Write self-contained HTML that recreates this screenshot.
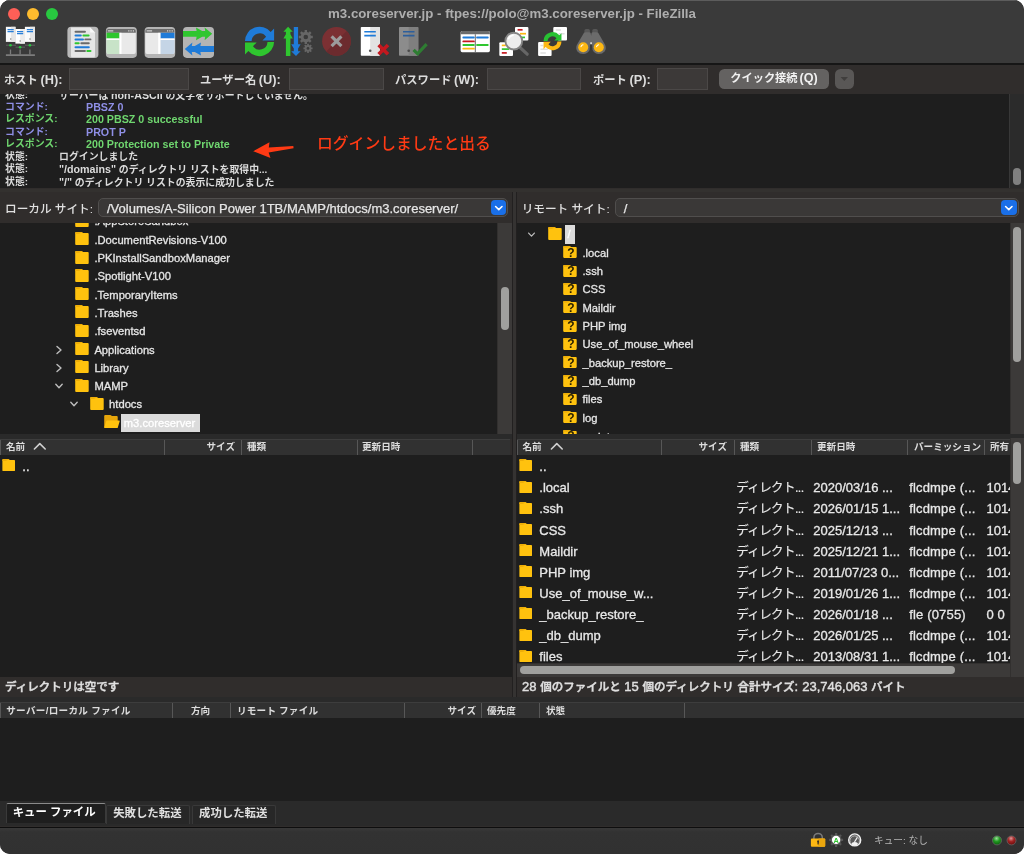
<!DOCTYPE html>
<html lang="ja">
<head>
<meta charset="utf-8">
<title>m3.coreserver.jp - ftpes://polo@m3.coreserver.jp - FileZilla</title>
<style>
*{box-sizing:border-box;margin:0;padding:0}
html,body{width:1024px;height:854px;background:#fff;overflow:hidden}
body{font-family:"Liberation Sans","Noto Sans CJK JP",sans-serif;color:#e4e4e4;font-size:12px;-webkit-font-smoothing:antialiased}
#win{will-change:transform;position:absolute;left:0;top:0;width:1024px;height:854px;background:#302d2c;border-radius:10px;overflow:hidden}
.abs{position:absolute}
#titlebar{position:absolute;left:0;top:0;width:1024px;height:63px;background:#3a3a3a;border-top:1px solid #5c5c5c}
#title{position:absolute;left:0;top:4.6px;width:1024px;text-align:center;font-size:13.25px;font-weight:bold;color:#aeaeae;line-height:16px;letter-spacing:0px}
.tl{position:absolute;top:6.5px;width:12px;height:12px;border-radius:50%}
#tbline{position:absolute;left:0;top:63px;width:1024px;height:2px;background:#161616}
/* quick connect */
#qc{position:absolute;left:0;top:65px;width:1024px;height:29.2px;background:#302d2c}
.lbl{position:absolute;font-size:11.3px;font-weight:bold;color:#dcdcdc;line-height:16px;white-space:nowrap}
.lbl i{font-style:normal;font-size:12.8px;margin-left:2.6px}
.inp{position:absolute;top:3px;height:22px;background:#3c3938;border:1px solid #4b4847}
/* log */
#log{position:absolute;left:0;top:94.2px;width:1024px;height:94px;background:#1e1e1e;overflow:hidden}
.ll{position:absolute;left:5px;font-size:9.9px;line-height:12.5px;white-space:nowrap;font-weight:bold}
.ll span{position:absolute;left:0;top:0}
.ll i{font-style:normal;font-size:10.7px}
.c-st{color:#dcdcdc}.c-cmd{color:#8f8fe6}.c-rsp{color:#6fd66f}

/* panes */
.band{position:absolute;background:#33312f}
.sitebar{position:absolute;top:192px;height:31.3px;background:#302d2c}
.sitelbl{position:absolute;top:8.6px;font-size:11.65px;line-height:16px;color:#e0e0e0;white-space:nowrap;font-weight:500}
.combo{position:absolute;top:5.5px;height:19.5px;background:#3a3837;border:1px solid #504e4d;border-radius:5px;font-size:13px;line-height:19.4px;color:#e6e6e6;padding-left:8px;white-space:nowrap;font-weight:500;-webkit-text-stroke:0.25px #e6e6e6}
.combo i{position:absolute;right:1px;top:1px;width:15.5px;height:15.5px;border-radius:4px;background:#1a6fe8}
.tree{position:absolute;top:223px;height:211px;background:#1e1e1e;overflow:hidden}
.tr{position:absolute;font-size:11.2px;line-height:14px;color:#e6e6e6;white-space:nowrap;font-weight:500;-webkit-text-stroke:0.3px #e6e6e6}
.fold{position:absolute;width:14px;height:13px}
.vsb{position:absolute;background:#3c3a39;border-left:1px solid #32302f}
.thumb{position:absolute;background:#a0a09e;border-radius:4px}
.hdr{position:absolute;height:16.2px;background:#313131;border-top:1px solid #3d3d3d;overflow:hidden}
.hdr b{position:absolute;top:0.7px;font-size:9.6px;line-height:13px;color:#dcdcdc;white-space:nowrap}
.hdr u{position:absolute;top:0;width:1px;height:17px;background:#575757}
.list{position:absolute;background:#1e1e1e;overflow:hidden}
.fr{position:absolute;left:0;font-size:13px;line-height:16px;color:#e8e8e8;white-space:nowrap;font-weight:500;-webkit-text-stroke:0.3px #e8e8e8}
.fr span{position:absolute;top:0}
.fr .k{font-size:12.5px;letter-spacing:-0.6px;font-weight:400;-webkit-text-stroke:0.15px #e8e8e8}
.fr .p{letter-spacing:0.17px}
.stat{position:absolute;padding:2.4px 0 0 5px;height:20.5px;background:#302d2c;font-size:11.5px;line-height:16px;color:#e0e0e0;font-weight:500;white-space:nowrap;-webkit-text-stroke:0.4px #e0e0e0}

.qf{position:absolute;width:14px;height:12px;color:#2a2000;font-size:12px;line-height:12px;font-weight:bold;text-align:center;padding-left:2.2px;padding-top:0.6px}
.qf svg{position:absolute;left:0;top:0;width:14px;height:12px}
.qf span{position:relative}
.stat i{font-style:normal;font-size:13px}
.stat{word-spacing:0.5px}
.tab{position:absolute;top:804.5px;height:19px;background:#272727;border:1px solid #393939;border-bottom:none;border-radius:2px 2px 0 0;font-size:11.4px;line-height:15.5px;color:#e0e0e0;text-align:left;padding-left:6px;white-space:nowrap;font-weight:bold}
.tab.sel{top:802.7px;height:20.8px;background:#1e1e1e;border-color:#3a3a3a;border-top:1px solid #8a8a8a;color:#fff;line-height:17.5px}
</style>
</head>
<body>
<div id="win">
<div id="titlebar">
  <div class="tl" style="left:7.5px;background:#fe5f57"></div>
  <div class="tl" style="left:27px;background:#febc2e"></div>
  <div class="tl" style="left:46px;background:#28c840"></div>
  <div id="title">m3.coreserver.jp - ftpes://polo@m3.coreserver.jp - FileZilla</div>
</div>
<svg class="abs" style="left:0;top:0" width="1024" height="64" viewBox="0 0 1024 64">
<!-- site manager -->
<g>
<rect x="5.9" y="26.8" width="9.6" height="15.1" fill="#fafafa"/><rect x="11" y="26.8" width="4.5" height="15.1" fill="#e6e6e6"/>
<rect x="24.9" y="26.8" width="10" height="15.1" fill="#fafafa"/><rect x="30" y="26.8" width="4.9" height="15.1" fill="#e6e6e6"/>
<rect x="15.4" y="29" width="9.5" height="14.6" fill="#ffffff"/><rect x="20.2" y="29" width="4.7" height="14.6" fill="#ececec"/>
<path d="M7.5 29.6h6.2M7.5 31.6h6.2M26.8 29.6h6.2M26.8 31.6h6.2M17 31.6h6.2M17 33.6h6.2" stroke="#2a7fd8" stroke-width="1.1"/>
<circle cx="10.7" cy="39" r="0.8" fill="#888"/><circle cx="30" cy="39" r="0.8" fill="#888"/><circle cx="20.2" cy="41" r="0.8" fill="#888"/>
<path d="M6 45.2h10M25 45.2h10M15.5 47.2h9.5" stroke="#555" stroke-width="1.6"/>
<circle cx="10.5" cy="45.2" r="1.3" fill="#27c93f"/><circle cx="29.9" cy="45.2" r="1.3" fill="#27c93f"/><circle cx="20.1" cy="47.2" r="1.3" fill="#27c93f"/>
<path d="M10.5 49.6v5M20.1 49.6v5M29.9 49.6v5" stroke="#7c7c7c" stroke-width="1.3"/>
<path d="M5.9 55.2h29" stroke="#7c7c7c" stroke-width="1.7"/>
</g>
<!-- log toggle -->
<g>
<rect x="67.4" y="26.8" width="31" height="31.2" rx="3.8" fill="#b9b9b9"/>
<path d="M71 27.6 H90.2 L95 32.4 V56 Q95 57.2 93.8 57.2 H72.2 Q71 57.2 71 56 Z" fill="#e6e6e6"/>
<path d="M90.2 27.6 L95 32.4 H90.2 Z" fill="#fafafa"/>
<path d="M75.5 31.8h9.5M85.3 39.4h5.2M81.3 43.3h7.5M75.5 51h9.5" stroke="#6a6a6a" stroke-width="1.9" stroke-linecap="round"/>
<path d="M75.5 35.6h5.3M75.5 39.4h7.5M75.5 47.2h13.3" stroke="#1f7bd8" stroke-width="2" stroke-linecap="round"/>
<path d="M83.4 35.6h5.2M75.5 43.3h3.2M87.3 51h3.2" stroke="#2fc62f" stroke-width="2" stroke-linecap="round"/>
</g>
<!-- local tree toggle -->
<g>
<rect x="105.9" y="26.9" width="31" height="31" rx="3.8" fill="#b4b4b4"/>
<path d="M106.5 30.8 Q106.5 29 108.3 29 H134 Q135.8 29 135.8 30.8 V52 Q135.8 53.9 134 53.9 H108.3 Q106.5 53.9 106.5 52 Z" fill="#e9e9e9"/>
<path d="M106.5 32.8 V30.8 Q106.5 29 108.3 29 H134 Q135.8 29 135.8 30.8 V32.8 Z" fill="#6b6b6b"/>
<path d="M107.8 30.9h5.5" stroke="#cfcfcf" stroke-width="1.1"/><path d="M128.2 30.9h1.2M130.5 30.9h1.2M132.8 30.9h1.2" stroke="#d8d8d8" stroke-width="1.1"/>
<rect x="106.5" y="32.8" width="13" height="5.7" fill="#2fc62f"/>
<rect x="106.5" y="38.5" width="13" height="1.6" fill="#fff"/>
<path d="M106.5 40.1 H119.5 V53.9 H108.3 Q106.5 53.9 106.5 52 Z" fill="#c8e3c8"/>
<rect x="119.5" y="32.8" width="2" height="21.1" fill="#fff"/>
</g>
<!-- remote tree toggle -->
<g>
<rect x="144.6" y="26.9" width="30.6" height="31" rx="3.8" fill="#b4b4b4"/>
<path d="M145.3 30.8 Q145.3 29 147.1 29 H172.7 Q174.5 29 174.5 30.8 V52 Q174.5 53.9 172.7 53.9 H147.1 Q145.3 53.9 145.3 52 Z" fill="#e9e9e9"/>
<path d="M145.3 32.8 V30.8 Q145.3 29 147.1 29 H172.7 Q174.5 29 174.5 30.8 V32.8 Z" fill="#6b6b6b"/>
<path d="M146.6 30.9h5.5" stroke="#cfcfcf" stroke-width="1.1"/><path d="M167 30.9h1.2M169.3 30.9h1.2M171.6 30.9h1.2" stroke="#d8d8d8" stroke-width="1.1"/>
<rect x="160.4" y="32.8" width="14.1" height="5.7" fill="#1f7bd8"/>
<rect x="160.4" y="38.5" width="14.1" height="1.6" fill="#fff"/>
<path d="M160.4 40.1 H174.5 V52 Q174.5 53.9 172.7 53.9 H160.4 Z" fill="#c5d5e6"/>
<rect x="158.2" y="32.8" width="2.2" height="21.1" fill="#fff"/>
</g>
<!-- queue toggle -->
<g>
<rect x="183" y="26.9" width="31" height="31" rx="3.8" fill="#b4b4b4"/>
<path d="M183 30.9 H196.6 L196 27.4 L202.2 30.9 H205.2 L204.6 27.4 L212.2 33.8 L204.6 40.2 L205.2 36.7 H202.2 L196 40.2 L196.6 36.7 H183 Z" fill="#2fc62f"/>
<path d="M214 46.1 H200.4 L201 42.6 L194.8 46.1 H191.8 L192.4 42.6 L184.8 49 L192.4 55.4 L191.8 51.9 H194.8 L201 55.4 L200.4 51.9 H214 Z" fill="#1f7bd8"/>
</g>
<!-- refresh -->
<g>
<path id="rfa" d="M245 41 A14.6 14.6 0 0 1 270.7 31.9 L274.1 28.4 V40.5 H262.4 L266.1 36.7 A8 8 0 0 0 251.6 41 Z" fill="#1f7bd8"/>
<path d="M245 41 A14.6 14.6 0 0 1 270.7 31.9 L274.1 28.4 V40.5 H262.4 L266.1 36.7 A8 8 0 0 0 251.6 41 Z" fill="#2fc62f" transform="rotate(180 259.55 41.45)"/>
</g>
<!-- process queue -->
<g>
<g fill="#666666">
<circle cx="305.8" cy="37" r="5.2"/>
<g stroke="#666666" stroke-width="2.4"><path d="M305.8 30v14M298.8 37h14M300.85 32.05l9.9 9.9M300.85 41.95l9.9-9.9"/></g>
<circle cx="308" cy="48.4" r="3.3"/>
<g stroke="#666666" stroke-width="1.7"><path d="M308 43.8v9.2M303.4 48.4h9.2M304.75 45.15l6.5 6.5M304.75 51.65l6.5-6.5"/></g>
</g>
<circle cx="305.8" cy="37" r="2.3" fill="#3a3a3a"/><circle cx="308" cy="48.4" r="1.4" fill="#3a3a3a"/>
<path d="M288.1 26.7 L292.8 31.8 H290.4 V34.2 L292.8 38.4 H290.4 V56 H285.9 V38.4 H283.4 L285.9 34.2 V31.8 H283.4 Z" fill="#2fc62f"/>
<path d="M293.8 27 H298.1 V44.3 H300.6 L298.1 48.5 V51.3 H300.6 L296 56 L291.2 51.3 H293.8 V48.5 L291.2 44.3 H293.8 Z" fill="#1f7bd8"/>
</g>
<!-- cancel -->
<g>
<circle cx="336.5" cy="41.3" r="14.4" fill="#7b3033"/>
<path d="M346.7 31.1 A14.4 14.4 0 0 1 326.3 51.5 Z" fill="#6c2b2e"/>
<path d="M331.6 36.4 L341.4 46.2 M341.4 36.4 L331.6 46.2" stroke="#9c9c9c" stroke-width="3.2"/>
</g>
<!-- disconnect -->
<g>
<rect x="360.8" y="26.9" width="19.1" height="28.9" rx="0.8" fill="#ffffff"/>
<path d="M370.2 26.9 H379.1 Q379.9 26.9 379.9 27.7 V55 Q379.9 55.8 379.1 55.8 H370.2 Z" fill="#e2e2e2"/>
<path d="M364.3 31.7h11.5M364.3 35.6h11.5" stroke="#1f7bd8" stroke-width="1.6"/>
<circle cx="370.2" cy="50.7" r="1.3" fill="#555"/>
<path d="M378.6 45 L388 54.2 M388 45 L378.6 54.2" stroke="#c4181f" stroke-width="3.6"/>
</g>
<!-- reconnect (disabled) -->
<g>
<rect x="399" y="26.9" width="19.3" height="28.9" rx="0.8" fill="#8c8c8c"/>
<path d="M408.7 26.9 H417.5 Q418.3 26.9 418.3 27.7 V55 Q418.3 55.8 417.5 55.8 H408.7 Z" fill="#7f7f7f"/>
<path d="M403 31.7h11.5M403 35.6h11.5" stroke="#2d5f9c" stroke-width="1.6"/>
<circle cx="408.7" cy="50.7" r="1.3" fill="#4a4a4a"/>
<path d="M413.6 49.8 L417.6 53.8 L426.6 44.2" fill="none" stroke="#2e7d32" stroke-width="3.2"/>
</g>
<!-- compare -->
<g>
<rect x="460.6" y="31.1" width="29.3" height="21.1" rx="1.6" fill="#ffffff"/>
<path d="M460.6 34.2 V32.7 Q460.6 31.1 462.2 31.1 H488.3 Q489.9 31.1 489.9 32.7 V34.2 Z" fill="#6b6b6b"/>
<path d="M475.3 34.2 V52.2" stroke="#6b6b6b" stroke-width="1"/>
<path d="M463.3 37.5h10.6M477 37.5h10.8" stroke="#1f7bd8" stroke-width="1.8" stroke-linecap="round"/>
<path d="M463.3 41.4h10.6" stroke="#c4181f" stroke-width="1.8" stroke-linecap="round"/>
<path d="M463.3 45h10.6M477 45h10.8" stroke="#2fc62f" stroke-width="1.8" stroke-linecap="round"/>
<path d="M463.3 48.7h10.6" stroke="#fdb813" stroke-width="1.8" stroke-linecap="round"/>
</g>
<!-- filter -->
<g>
<rect x="515" y="27" width="13.4" height="13.4" rx="1" fill="#ffffff"/>
<path d="M517.6 29.8h5" stroke="#c4181f" stroke-width="1.7"/><path d="M520 33.7h6" stroke="#fdb813" stroke-width="1.7"/><path d="M520 37.4h5" stroke="#2fc62f" stroke-width="1.7"/>
<rect x="499.3" y="42.3" width="13.7" height="13.7" rx="1" fill="#ffffff"/>
<path d="M501.8 45.4h4" stroke="#fdb813" stroke-width="1.7"/><path d="M501.8 49.1h7.5" stroke="#2fc62f" stroke-width="1.7"/><path d="M501.8 52.9h5" stroke="#c4181f" stroke-width="1.7"/>
<path d="M520 47.5 L527.2 54.2" stroke="#666" stroke-width="3.2" stroke-linecap="round"/>
<circle cx="513.8" cy="41.1" r="8.4" fill="#ededed" stroke="#858585" stroke-width="1.9"/>
<path d="M508.6 38.6 A5.6 5.6 0 0 1 513 35.3" fill="none" stroke="#fff" stroke-width="1.6" stroke-linecap="round"/>
</g>
<!-- sync browsing -->
<g>
<rect x="553.3" y="27" width="13.7" height="13.6" rx="1" fill="#ffffff"/>
<path d="M555.8 29.9h5.2M558.6 33.7h6" stroke="#dedede" stroke-width="1.5"/>
<rect x="538.1" y="41.9" width="13.5" height="14" rx="1" fill="#ffffff"/>
<path d="M540.4 45.4h3M540.4 49.2h7.4M540.4 53h5.4" stroke="#dedede" stroke-width="1.5"/>
<circle cx="552.5" cy="41.2" r="6" fill="#3a3a3a"/>
<g transform="translate(552.5 41.2) scale(0.616) translate(-259.55 -41.45)">
<path d="M245 41 A14.6 14.6 0 0 1 270.7 31.9 L274.1 28.4 V40.5 H262.4 L266.1 36.7 A8 8 0 0 0 251.6 41 Z" fill="#27c132"/>
<path d="M245 41 A14.6 14.6 0 0 1 270.7 31.9 L274.1 28.4 V40.5 H262.4 L266.1 36.7 A8 8 0 0 0 251.6 41 Z" fill="#fdb813" transform="rotate(180 259.55 41.45)"/>
</g>
</g>
<!-- binoculars -->
<g>
<rect x="584.4" y="29" width="5.5" height="8" rx="1.6" fill="#575757"/><rect x="592.3" y="29" width="5.5" height="8" rx="1.6" fill="#575757"/>
<path d="M584 32.8 Q584.6 32.2 586 32.2 H589 Q590.6 32.2 590.8 33.6 L591.1 36 L591.4 33.6 Q591.6 32.2 593.2 32.2 H596.2 Q597.6 32.2 598.2 32.8 L605.2 45 Q606.6 48.8 604.6 51.4 Q602.4 54 598.8 54 Q594.6 54 592.6 50 L592.2 44.6 H590 L589.6 50 Q587.6 54 583.2 54 Q579.6 54 577.4 51.4 Q575.4 48.8 576.8 45 Z" fill="#6b6b6b"/>
<rect x="590.3" y="42.3" width="1.6" height="1.8" fill="#e0e0e0"/>
<circle cx="583.2" cy="47.3" r="5" fill="#fdb813"/><circle cx="598.8" cy="47.3" r="5" fill="#fdb813"/>
<path d="M581 46.6 A2.6 2.6 0 0 1 583 44.8M596.6 46.6 A2.6 2.6 0 0 1 598.6 44.8" fill="none" stroke="#fff" stroke-width="1.1" stroke-linecap="round"/>
</g>
</svg>


<div id="tbline"></div>
<div id="qc">
  <div class="lbl" style="left:4px;top:7px">ホスト<i>(H):</i></div>
  <div class="inp" style="left:69px;width:120px"></div>
  <div class="lbl" style="left:200px;top:7px">ユーザー名<i>(U):</i></div>
  <div class="inp" style="left:289px;width:95px"></div>
  <div class="lbl" style="left:395px;top:7px">パスワード<i>(W):</i></div>
  <div class="inp" style="left:487px;width:94px"></div>
  <div class="lbl" style="left:593px;top:7px">ポート<i>(P):</i></div>
  <div class="inp" style="left:657px;width:51px"></div>
  <div class="abs" style="left:719.3px;top:4px;width:109.4px;height:19.6px;background:#646261;border-radius:5.5px;font-size:11.2px;line-height:19.8px;font-weight:bold;color:#f0f0f0;text-align:center;white-space:nowrap">クイック接続<i style="font-style:normal;font-size:12.6px;margin-left:2px">(Q)</i></div>
  <div class="abs" style="left:835.3px;top:4px;width:19px;height:19.6px;background:#595756;border-radius:5.5px"><svg width="19" height="19.6" viewBox="0 0 19 19.6"><path d="M5.6 8 H13 L9.3 12 Z" fill="#403e3d"/></svg></div>
</div>
<div id="log">
<div class="ll c-st" style="top:-5.7px">状態:<span style="left:54px">サーバーは <i>non-ASCII</i> の文字をサポートしていません。</span></div>
<div class="ll c-cmd" style="top:6.8px">コマンド:<span style="left:81px"><i>PBSZ 0</i></span></div>
<div class="ll c-rsp" style="top:19.3px">レスポンス:<span style="left:81px"><i>200 PBSZ 0 successful</i></span></div>
<div class="ll c-cmd" style="top:31.8px">コマンド:<span style="left:81px"><i>PROT P</i></span></div>
<div class="ll c-rsp" style="top:44.3px">レスポンス:<span style="left:81px"><i>200 Protection set to Private</i></span></div>
<div class="ll c-st" style="top:56.8px">状態:<span style="left:54px">ログインしました</span></div>
<div class="ll c-st" style="top:69.3px">状態:<span style="left:54px"><i>"/domains"</i> のディレクトリ リストを取得中...</span></div>
<div class="ll c-st" style="top:81.8px">状態:<span style="left:54px"><i>"/"</i> のディレクトリ リストの表示に成功しました</span></div>
<svg class="abs" style="left:250px;top:44.2px" width="48" height="22" viewBox="250 138 48 22"><path d="M253.2 151.2 L269.5 142.2 L268.8 147.6 L293.3 145.9 L293.6 148.3 L268.6 152.6 L270.5 158 Z" fill="#ff3a14"/></svg>
<div class="abs" style="left:317px;top:40.2px;font-size:15.8px;line-height:20px;color:#ff3a14;white-space:nowrap;font-weight:500">ログインしましたと出る</div>
<div class="vsb" style="left:1009.4px;top:0;width:14.6px;height:95px;background:#2b2b2b;border-left:1px solid #383838"><div class="thumb" style="left:2.6px;top:73.4px;width:8px;height:17.6px;background:#808080"></div></div>
</div>

<svg width="0" height="0" style="position:absolute"><defs>
<symbol id="fo" viewBox="0 0 14 13"><path d="M0.2 1 Q0.2 0 1.2 0 H6.3 Q6.9 0 7.3 0.5 L7.9 1.1 H12.8 Q13.7 1.1 13.7 2 V12 Q13.7 12.9 12.8 12.9 H1.1 Q0.2 12.9 0.2 12 Z" fill="#ffc20e"/><path d="M0.2 1 Q0.2 0 1.2 0 H6.3 Q6.9 0 7.3 0.5 L7.9 1.1 H6 Q5.2 1.1 4.6 1.6 L4.2 2 H0.2 Z" fill="#eeae08"/></symbol>
<symbol id="foo" viewBox="0 0 16 13"><path d="M0.2 1 Q0.2 0 1.2 0 H6.3 Q6.9 0 7.3 0.5 L7.9 1.1 H12.8 Q13.7 1.1 13.7 2 V12 Q13.7 12.9 12.8 12.9 H1.1 Q0.2 12.9 0.2 12 Z" fill="#e6a50a"/><path d="M3.2 5.6 H15.2 Q15.9 5.6 15.7 6.3 L13.9 12.2 Q13.7 12.9 13 12.9 H0.9 Q0.1 12.9 0.3 12.2 L2.2 6.3 Q2.4 5.6 3.2 5.6 Z" fill="#ffc20e"/></symbol>
<symbol id="chr" viewBox="0 0 8 10"><path d="M2 1.4 L6 5 L2 8.6" fill="none" stroke="#bdbdbd" stroke-width="1.4" stroke-linecap="round" stroke-linejoin="round"/></symbol>
<symbol id="chd" viewBox="0 0 10 8"><path d="M1.8 2.3 L5 5.7 L8.2 2.3" fill="none" stroke="#bdbdbd" stroke-width="1.4" stroke-linecap="round" stroke-linejoin="round"/></symbol>
</defs></svg>

<div class="band" style="left:0;top:188.5px;width:1024px;height:3.5px"></div>
<div class="band" style="left:512px;top:192px;width:5px;height:506px;background:#353332;border-left:1px solid #222020;border-right:1px solid #222020"></div>
<div class="sitebar" style="left:0;width:512px"><div class="sitelbl" style="left:5px">ローカル サイト:</div><div class="combo" style="left:98px;width:410px"><span>/Volumes/A-Silicon Power 1TB/MAMP/htdocs/m3.coreserver/</span><i><svg width="16" height="16" viewBox="0 0 16 16" style="position:absolute;left:0;top:0"><path d="M4.6 6.5 L7.8 9.6 L11 6.5" fill="none" stroke="#fff" stroke-width="1.6" stroke-linecap="round" stroke-linejoin="round"/></svg></i></div></div>
<div class="sitebar" style="left:517px;width:507px"><div class="sitelbl" style="left:4.7px">リモート サイト:</div><div class="combo" style="left:97.8px;width:404.2px"><span>/</span><i><svg width="16" height="16" viewBox="0 0 16 16" style="position:absolute;left:0;top:0"><path d="M4.6 6.5 L7.8 9.6 L11 6.5" fill="none" stroke="#fff" stroke-width="1.6" stroke-linecap="round" stroke-linejoin="round"/></svg></i></div></div>
<div class="tree" style="left:0;width:512px">
<svg class="fold" style="left:75.1px;top:-9.1px"><use href="#fo"/></svg>
<div class="tr" style="left:94.4px;top:-8.6px">.AppStoreSandbox</div>
<svg class="fold" style="left:75.1px;top:9.2px"><use href="#fo"/></svg>
<div class="tr" style="left:94.4px;top:9.7px">.DocumentRevisions-V100</div>
<svg class="fold" style="left:75.1px;top:27.5px"><use href="#fo"/></svg>
<div class="tr" style="left:94.4px;top:28.0px">.PKInstallSandboxManager</div>
<svg class="fold" style="left:75.1px;top:45.8px"><use href="#fo"/></svg>
<div class="tr" style="left:94.4px;top:46.3px">.Spotlight-V100</div>
<svg class="fold" style="left:75.1px;top:64.1px"><use href="#fo"/></svg>
<div class="tr" style="left:94.4px;top:64.6px">.TemporaryItems</div>
<svg class="fold" style="left:75.1px;top:82.4px"><use href="#fo"/></svg>
<div class="tr" style="left:94.4px;top:82.9px">.Trashes</div>
<svg class="fold" style="left:75.1px;top:100.7px"><use href="#fo"/></svg>
<div class="tr" style="left:94.4px;top:101.2px">.fseventsd</div>
<svg class="abs" style="left:55px;top:121.5px" width="8" height="10"><use href="#chr"/></svg>
<svg class="fold" style="left:75.1px;top:119.0px"><use href="#fo"/></svg>
<div class="tr" style="left:94.4px;top:119.5px">Applications</div>
<svg class="abs" style="left:55px;top:139.8px" width="8" height="10"><use href="#chr"/></svg>
<svg class="fold" style="left:75.1px;top:137.3px"><use href="#fo"/></svg>
<div class="tr" style="left:94.4px;top:137.8px">Library</div>
<svg class="abs" style="left:54.0px;top:159.1px" width="10" height="8"><use href="#chd"/></svg>
<svg class="fold" style="left:75.1px;top:155.6px"><use href="#fo"/></svg>
<div class="tr" style="left:94.4px;top:156.1px">MAMP</div>
<svg class="abs" style="left:68.7px;top:177.4px" width="10" height="8"><use href="#chd"/></svg>
<svg class="fold" style="left:89.6px;top:173.9px"><use href="#fo"/></svg>
<div class="tr" style="left:109.1px;top:174.4px">htdocs</div>
<svg class="fold" style="left:104.1px;top:192.4px;width:16px"><use href="#foo"/></svg>
<div class="abs" style="left:120.6px;top:190.5px;width:79.4px;height:18.3px;background:#dbdbdb"></div>
<div class="tr" style="left:123.8px;top:192.7px;color:#fff;-webkit-text-stroke-color:#fff">m3.coreserver</div>
<div class="vsb" style="left:497.3px;top:0;width:14.7px;height:211px"><div class="thumb" style="left:3px;top:63.7px;width:7.8px;height:43px"></div></div>
</div>
<div class="tree" style="left:517px;width:507px">
<svg class="abs" style="left:10.4px;top:7.8px" width="9" height="7.2"><use href="#chd"/></svg>
<svg class="fold" style="left:31.2px;top:3.9px"><use href="#fo"/></svg>
<div class="abs" style="left:47.8px;top:1.8px;width:10.2px;height:19px;background:#dbdbdb"></div>
<div class="tr" style="left:50.5px;top:4.2px;color:#fff;-webkit-text-stroke-color:#fff">/</div>
<div class="qf" style="left:45.8px;top:23.2px"><svg viewBox="0 0 14 13" preserveAspectRatio="none"><use href="#fo"/></svg><span>?</span></div>
<div class="tr" style="left:65.5px;top:22.5px">.local</div>
<div class="qf" style="left:45.8px;top:41.6px"><svg viewBox="0 0 14 13" preserveAspectRatio="none"><use href="#fo"/></svg><span>?</span></div>
<div class="tr" style="left:65.5px;top:40.9px">.ssh</div>
<div class="qf" style="left:45.8px;top:59.9px"><svg viewBox="0 0 14 13" preserveAspectRatio="none"><use href="#fo"/></svg><span>?</span></div>
<div class="tr" style="left:65.5px;top:59.2px">CSS</div>
<div class="qf" style="left:45.8px;top:78.2px"><svg viewBox="0 0 14 13" preserveAspectRatio="none"><use href="#fo"/></svg><span>?</span></div>
<div class="tr" style="left:65.5px;top:77.5px">Maildir</div>
<div class="qf" style="left:45.8px;top:96.5px"><svg viewBox="0 0 14 13" preserveAspectRatio="none"><use href="#fo"/></svg><span>?</span></div>
<div class="tr" style="left:65.5px;top:95.8px">PHP img</div>
<div class="qf" style="left:45.8px;top:114.9px"><svg viewBox="0 0 14 13" preserveAspectRatio="none"><use href="#fo"/></svg><span>?</span></div>
<div class="tr" style="left:65.5px;top:114.2px">Use_of_mouse_wheel</div>
<div class="qf" style="left:45.8px;top:133.2px"><svg viewBox="0 0 14 13" preserveAspectRatio="none"><use href="#fo"/></svg><span>?</span></div>
<div class="tr" style="left:65.5px;top:132.5px">_backup_restore_</div>
<div class="qf" style="left:45.8px;top:151.5px"><svg viewBox="0 0 14 13" preserveAspectRatio="none"><use href="#fo"/></svg><span>?</span></div>
<div class="tr" style="left:65.5px;top:150.8px">_db_dump</div>
<div class="qf" style="left:45.8px;top:169.9px"><svg viewBox="0 0 14 13" preserveAspectRatio="none"><use href="#fo"/></svg><span>?</span></div>
<div class="tr" style="left:65.5px;top:169.2px">files</div>
<div class="qf" style="left:45.8px;top:188.2px"><svg viewBox="0 0 14 13" preserveAspectRatio="none"><use href="#fo"/></svg><span>?</span></div>
<div class="tr" style="left:65.5px;top:187.5px">log</div>
<div class="qf" style="left:45.8px;top:206.5px"><svg viewBox="0 0 14 13" preserveAspectRatio="none"><use href="#fo"/></svg><span>?</span></div>
<div class="tr" style="left:65.5px;top:207.0px">maintenance</div>
<div class="vsb" style="left:492.5px;top:0;width:14.5px;height:211px"><div class="thumb" style="left:2.8px;top:4px;width:8px;height:135px"></div></div>
</div>
<div class="band" style="left:0;top:434px;width:512px;height:5px;background:#2a2a2a"></div>
<div class="band" style="left:517px;top:434px;width:507px;height:5px;background:#2a2a2a"></div>
<div class="hdr" style="left:0;top:438.8px;width:510.3px"><u style="left:0"></u><b style="left:6px">名前</b><svg class="abs" style="left:32.6px;top:2.3px" width="14" height="9"><path d="M1.4 7 L6.8 1.6 L12.2 7" fill="none" stroke="#d0d0d0" stroke-width="1.6" stroke-linecap="round" stroke-linejoin="round"/></svg><u style="left:164px"></u><b style="right:275.3px">サイズ</b><u style="left:241px"></u><b style="left:247px">種類</b><u style="left:357px"></u><b style="left:362px">更新日時</b><u style="left:472px"></u></div>
<div class="list" style="left:0;top:455px;width:512px;height:222px"><svg class="fold" style="left:1.9px;top:4.3px;width:13.5px;height:12.2px"><use href="#fo"/></svg><div class="fr" style="left:22.3px;top:4px">..</div></div>
<div class="stat" style="left:0;top:677px;width:512px;">ディレクトリは空です</div>
<div class="hdr" style="left:517px;top:438.8px;width:493px"><u style="left:0"></u><b style="left:5.5px">名前</b><svg class="abs" style="left:32.6px;top:2.3px" width="14" height="9"><path d="M1.4 7 L6.8 1.6 L12.2 7" fill="none" stroke="#d0d0d0" stroke-width="1.6" stroke-linecap="round" stroke-linejoin="round"/></svg><u style="left:144px"></u><b style="right:283px">サイズ</b><u style="left:216.5px"></u><b style="left:223px">種類</b><u style="left:294px"></u><b style="left:300px">更新日時</b><u style="left:390px"></u><b style="left:397px">パーミッション</b><u style="left:466.5px"></u><b style="left:473px">所有</b></div>
<div class="list" style="left:517px;top:455px;width:493px;height:222px">
<svg class="fold" style="left:1.9px;top:4.3px;width:13.5px;height:12.2px"><use href="#fo"/></svg>
<div class="fr" style="top:4.0px"><span style="left:22.3px">..</span></div>
<svg class="fold" style="left:1.9px;top:25.5px;width:13.5px;height:12.2px"><use href="#fo"/></svg>
<div class="fr" style="top:25.2px"><span style="left:22.3px">.local</span><span class="k" style="left:219.3px">ディレクト...</span><span style="left:296.3px">2020/03/16 ...</span><span class="p" style="left:392.2px">flcdmpe (...</span><span style="left:469.6px">1014</span></div>
<svg class="fold" style="left:1.9px;top:46.6px;width:13.5px;height:12.2px"><use href="#fo"/></svg>
<div class="fr" style="top:46.3px"><span style="left:22.3px">.ssh</span><span class="k" style="left:219.3px">ディレクト...</span><span style="left:296.3px">2026/01/15 1...</span><span class="p" style="left:392.2px">flcdmpe (...</span><span style="left:469.6px">1014</span></div>
<svg class="fold" style="left:1.9px;top:67.8px;width:13.5px;height:12.2px"><use href="#fo"/></svg>
<div class="fr" style="top:67.5px"><span style="left:22.3px">CSS</span><span class="k" style="left:219.3px">ディレクト...</span><span style="left:296.3px">2025/12/13 ...</span><span class="p" style="left:392.2px">flcdmpe (...</span><span style="left:469.6px">1014</span></div>
<svg class="fold" style="left:1.9px;top:88.9px;width:13.5px;height:12.2px"><use href="#fo"/></svg>
<div class="fr" style="top:88.6px"><span style="left:22.3px">Maildir</span><span class="k" style="left:219.3px">ディレクト...</span><span style="left:296.3px">2025/12/21 1...</span><span class="p" style="left:392.2px">flcdmpe (...</span><span style="left:469.6px">1014</span></div>
<svg class="fold" style="left:1.9px;top:110.1px;width:13.5px;height:12.2px"><use href="#fo"/></svg>
<div class="fr" style="top:109.8px"><span style="left:22.3px">PHP img</span><span class="k" style="left:219.3px">ディレクト...</span><span style="left:296.3px">2011/07/23 0...</span><span class="p" style="left:392.2px">flcdmpe (...</span><span style="left:469.6px">1014</span></div>
<svg class="fold" style="left:1.9px;top:131.3px;width:13.5px;height:12.2px"><use href="#fo"/></svg>
<div class="fr" style="top:131.0px"><span style="left:22.3px">Use_of_mouse_w...</span><span class="k" style="left:219.3px">ディレクト...</span><span style="left:296.3px">2019/01/26 1...</span><span class="p" style="left:392.2px">flcdmpe (...</span><span style="left:469.6px">1014</span></div>
<svg class="fold" style="left:1.9px;top:152.4px;width:13.5px;height:12.2px"><use href="#fo"/></svg>
<div class="fr" style="top:152.1px"><span style="left:22.3px">_backup_restore_</span><span class="k" style="left:219.3px">ディレクト...</span><span style="left:296.3px">2026/01/18 ...</span><span class="p" style="left:392.2px">fle (0755)</span><span style="left:469.6px">0 0</span></div>
<svg class="fold" style="left:1.9px;top:173.6px;width:13.5px;height:12.2px"><use href="#fo"/></svg>
<div class="fr" style="top:173.3px"><span style="left:22.3px">_db_dump</span><span class="k" style="left:219.3px">ディレクト...</span><span style="left:296.3px">2026/01/25 ...</span><span class="p" style="left:392.2px">flcdmpe (...</span><span style="left:469.6px">1014</span></div>
<svg class="fold" style="left:1.9px;top:194.7px;width:13.5px;height:12.2px"><use href="#fo"/></svg>
<div class="fr" style="top:194.4px"><span style="left:22.3px">files</span><span class="k" style="left:219.3px">ディレクト...</span><span style="left:296.3px">2013/08/31 1...</span><span class="p" style="left:392.2px">flcdmpe (...</span><span style="left:469.6px">1014</span></div>
<div class="abs" style="left:0;top:207.5px;width:493px;height:14.5px;background:#3c3a39;border-top:1px solid #32302f"><div class="thumb" style="left:2.8px;top:2.4px;width:435.5px;height:8px"></div></div>
</div>
<div class="vsb" style="left:1009.5px;top:438px;width:14.5px;height:239px"><div class="thumb" style="left:2.8px;top:3.6px;width:8px;height:42px"></div></div>
<div class="stat" style="left:517px;top:677px;width:507px;"><i>28</i> 個のファイルと <i>15</i> 個のディレクトリ 合計サイズ<i>: 23,746,063</i> バイト</div>
<div class="band" style="left:0;top:697.3px;width:1024px;height:5px;background:#2a2a2a"></div>
<div class="hdr" style="left:0;top:702.1px;width:1024px;height:15.9px"><u style="left:0"></u><b style="left:6.2px;letter-spacing:0.3px">サーバー/ローカル ファイル</b><u style="left:172px"></u><b style="left:191px">方向</b><u style="left:230px"></u><b style="left:237px;letter-spacing:0.2px">リモート ファイル</b><u style="left:404px"></u><b style="right:548px">サイズ</b><u style="left:481px"></u><b style="left:487px">優先度</b><u style="left:539px"></u><b style="left:546px">状態</b><u style="left:684px"></u></div>
<div class="list" style="left:0;top:718px;width:1024px;height:83.3px"></div>
<div class="abs" style="left:0;top:801.3px;width:1024px;height:25.2px;background:#2a2a2a"></div>
<div class="tab sel" style="left:5.7px;width:100px">キュー ファイル</div><div class="tab" style="left:106.2px;width:84.2px">失敗した転送</div><div class="tab" style="left:192px;width:84.2px">成功した転送</div>
<div class="abs" style="left:0;top:826.5px;width:1024px;height:1.5px;background:#0e0e0e"></div>
<div class="abs" style="left:0;top:828px;width:1024px;height:26px;background:linear-gradient(#393939,#323232 4px,#313131)"></div>
<svg class="abs" style="left:800px;top:826px" width="224" height="28" viewBox="800 826 224 28">
<defs>
<radialGradient id="lg" cx="0.45" cy="0.28" r="0.75"><stop offset="0" stop-color="#9be09b"/><stop offset="0.45" stop-color="#239a23"/><stop offset="1" stop-color="#075a07"/></radialGradient>
<radialGradient id="lr" cx="0.45" cy="0.28" r="0.75"><stop offset="0" stop-color="#e09a9a"/><stop offset="0.45" stop-color="#a32424"/><stop offset="1" stop-color="#650808"/></radialGradient>
</defs>
<!-- lock -->
<path d="M813.9 839 V837.6 A4.2 4.2 0 0 1 822.3 837.6 V839" fill="none" stroke="#7a7a7a" stroke-width="1.5"/>
<rect x="810.9" y="838.5" width="14.3" height="8.3" rx="1" fill="#fdb813"/>
<rect x="818.1" y="838.5" width="7.1" height="8.3" rx="1" fill="#eaa60e"/>
<path d="M817.2 841.2 a0.9 0.9 0 0 1 1.8 0 L818.6 844.6 H817.6 Z" fill="#3a3020"/>
<!-- A gear -->
<g stroke="#565656" stroke-width="2.2"><path d="M836.1 832.9v14M829.1 839.9h14M831.15 834.95l9.9 9.9M831.15 844.85l9.9-9.9"/></g>
<circle cx="836.1" cy="839.9" r="5.4" fill="#565656"/>
<circle cx="836.1" cy="839.9" r="4.2" fill="#ffffff"/>
<text x="836.1" y="842.5" font-family="Liberation Sans, sans-serif" font-size="7.4" font-weight="bold" fill="#2fc62f" text-anchor="middle">A</text>
<!-- speed -->
<circle cx="854.7" cy="839.9" r="6" fill="#5a5a5a" stroke="#f0f0f0" stroke-width="1.4"/>
<path d="M850.3 842.6 A4.8 4.8 0 1 1 859.1 842.6" fill="none" stroke="#bdbdbd" stroke-width="0.9"/>
<path d="M851.4 843.2 Q854.7 840.6 858 843.2 L857 845.2 Q854.7 846.4 852.4 845.2 Z" fill="#f4f4f4"/>
<path d="M854.7 841.6 L857.2 837.6" stroke="#f4f4f4" stroke-width="1.1" stroke-linecap="round"/>
<!-- leds -->
<circle cx="997" cy="840.4" r="4.5" fill="url(#lg)" stroke="#6e6e6e" stroke-width="0.7"/>
<circle cx="1011.5" cy="840.4" r="4.5" fill="url(#lr)" stroke="#6e6e6e" stroke-width="0.7"/>
</svg>

<div class="abs" style="left:874px;top:833.5px;font-size:9.7px;line-height:14px;color:#b4b4b4;white-space:nowrap">キュー: なし</div>
</div>
</body>
</html>
